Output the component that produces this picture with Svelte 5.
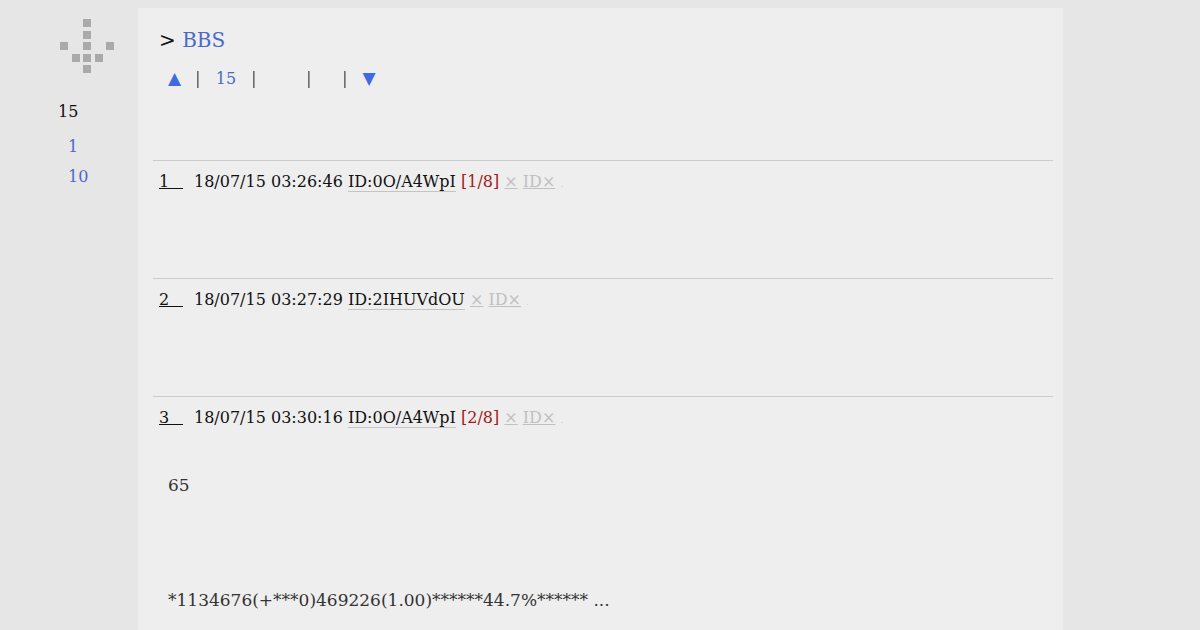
<script>
  const logo = [
    0, 0, 1, 0, 0,
    0, 0, 1, 0, 0,
    1, 0, 1, 0, 1,
    0, 1, 1, 1, 0,
    0, 0, 1, 0, 0
  ];

  const posts = [
    { no: 1, date: '18/07/15 03:26:46', id: '0O/A4WpI', count: '[1/8]' },
    { no: 2, date: '18/07/15 03:27:29', id: '2IHUVdOU', count: '' },
    { no: 3, date: '18/07/15 03:30:16', id: '0O/A4WpI', count: '[2/8]' }
  ];
</script>

<div class="page">
  <aside class="side">
    <div class="logo">
      {#each logo as on}
        <span class:on></span>
      {/each}
    </div>
    <div class="side-title">15</div>
    <a class="side-link first" href="#top">1</a>
    <a class="side-link" href="#top">10</a>
  </aside>

  <main class="content">
    <h1><span class="gt">&gt;</span> <a href="#top">BBS</a></h1>

    <nav class="pager">
      <a class="arrow up" href="#top">▲</a>
      <span class="sep">|</span>
      <a class="num" href="#top">15</a>
      <span class="sep">|</span>
      <span class="blank1"></span>
      <span class="sep">|</span>
      <span class="blank2"></span>
      <span class="sep">|</span>
      <a class="arrow down" href="#top">▼</a>
    </nav>

    {#each posts as post}
      <section class="post">
        <div class="head">
          <span class="no">{post.no}</span><span class="date">{post.date}</span>
          <span class="id">ID:{post.id}</span>
          {#if post.count}<span class="count">{post.count}</span>{/if}
          <span class="ng">×</span>
          <span class="ng">ID×</span>
          <span class="dot">.</span>
        </div>
      </section>
    {/each}

    <p class="body-a">65</p>
    <p class="body-b">*1134676(+***0)469226(1.00)******44.7%****** ...</p>
  </main>
</div>

<style>
  :global(body) {
    margin: 0;
    background: #e6e6e6;
    font-family: "DejaVu Serif", serif;
    overflow: hidden;
  }

  .page {
    display: flex;
    height: 630px;
    overflow: hidden;
  }

  .side {
    width: 138px;
    flex: none;
    box-sizing: border-box;
    padding: 19px 0 0 58px;
  }

  .logo {
    display: grid;
    grid-template-columns: repeat(5, 8px);
    grid-auto-rows: 8px;
    gap: 3.5px;
    margin-left: 2px;
  }

  .logo span.on {
    background: #aaaaaa;
  }

  .side-title {
    margin-top: 29px;
    font-size: 16px;
    line-height: 20px;
    color: #111;
  }

  .side-link {
    display: block;
    margin: 10px 0 0 10px;
    font-size: 16px;
    line-height: 20px;
    color: #4a6acb;
    text-decoration: none;
  }

  .side-link.first {
    margin-top: 15px;
  }

  .content {
    width: 925px;
    flex: none;
    margin-top: 8px;
    box-sizing: border-box;
    padding: 0 10px 0 15px;
    background: #eeeeee;
  }

  h1 {
    margin: 0;
    padding: 19px 0 0 6px;
    font-size: 20px;
    line-height: 26px;
    font-weight: normal;
    color: #111;
  }

  h1 a {
    color: #4a6acb;
    text-decoration: none;
  }

  .pager {
    display: flex;
    align-items: center;
    height: 24px;
    margin-top: 13px;
    padding-left: 14px;
    font-size: 16px;
    line-height: 24px;
    color: #555;
  }

  .pager a {
    text-decoration: none;
    color: #4a6acb;
  }

  .sep {
    font-size: 17px;
    will-change: transform; /* keeps the thin bar grey */
  }

  .arrow {
    font-size: 17px;
    color: #4169e1 !important;
  }

  .up { margin: 0 14px 0 1px; }
  .num { margin: 0 15px; position: relative; top: 1px; }
  .blank1 { width: 49px; }
  .blank2 { width: 30px; }
  .down { margin-left: 15px; }

  .post {
    height: 117px;
    border-top: 1px solid #cccccc;
  }

  .post:first-of-type {
    margin-top: 70px;
  }

  .head {
    padding: 11px 0 0 6px;
    font-size: 16px;
    line-height: 20px;
    color: #111;
    white-space: nowrap;
  }

  .no {
    display: inline-block;
    width: 24px;
    margin-right: 11px;
    border-bottom: 1px solid #111;
    line-height: 13px;
  }

  .id {
    border-bottom: 1px solid #c4c4c4;
  }

  .count {
    color: #a51a1a;
  }

  .ng {
    color: #c0c0c0;
    text-decoration: underline;
  }

  .dot {
    color: #d0d0d0;
    font-size: 9px;
  }

  .body-a, .body-b {
    margin: 0;
    padding-left: 15px;
    font-size: 17px;
    line-height: 22px;
    color: #333;
    white-space: nowrap;
  }

  .body-a {
    margin-top: -40px;
  }

  .body-b {
    margin-top: 93px;
  }
</style>
